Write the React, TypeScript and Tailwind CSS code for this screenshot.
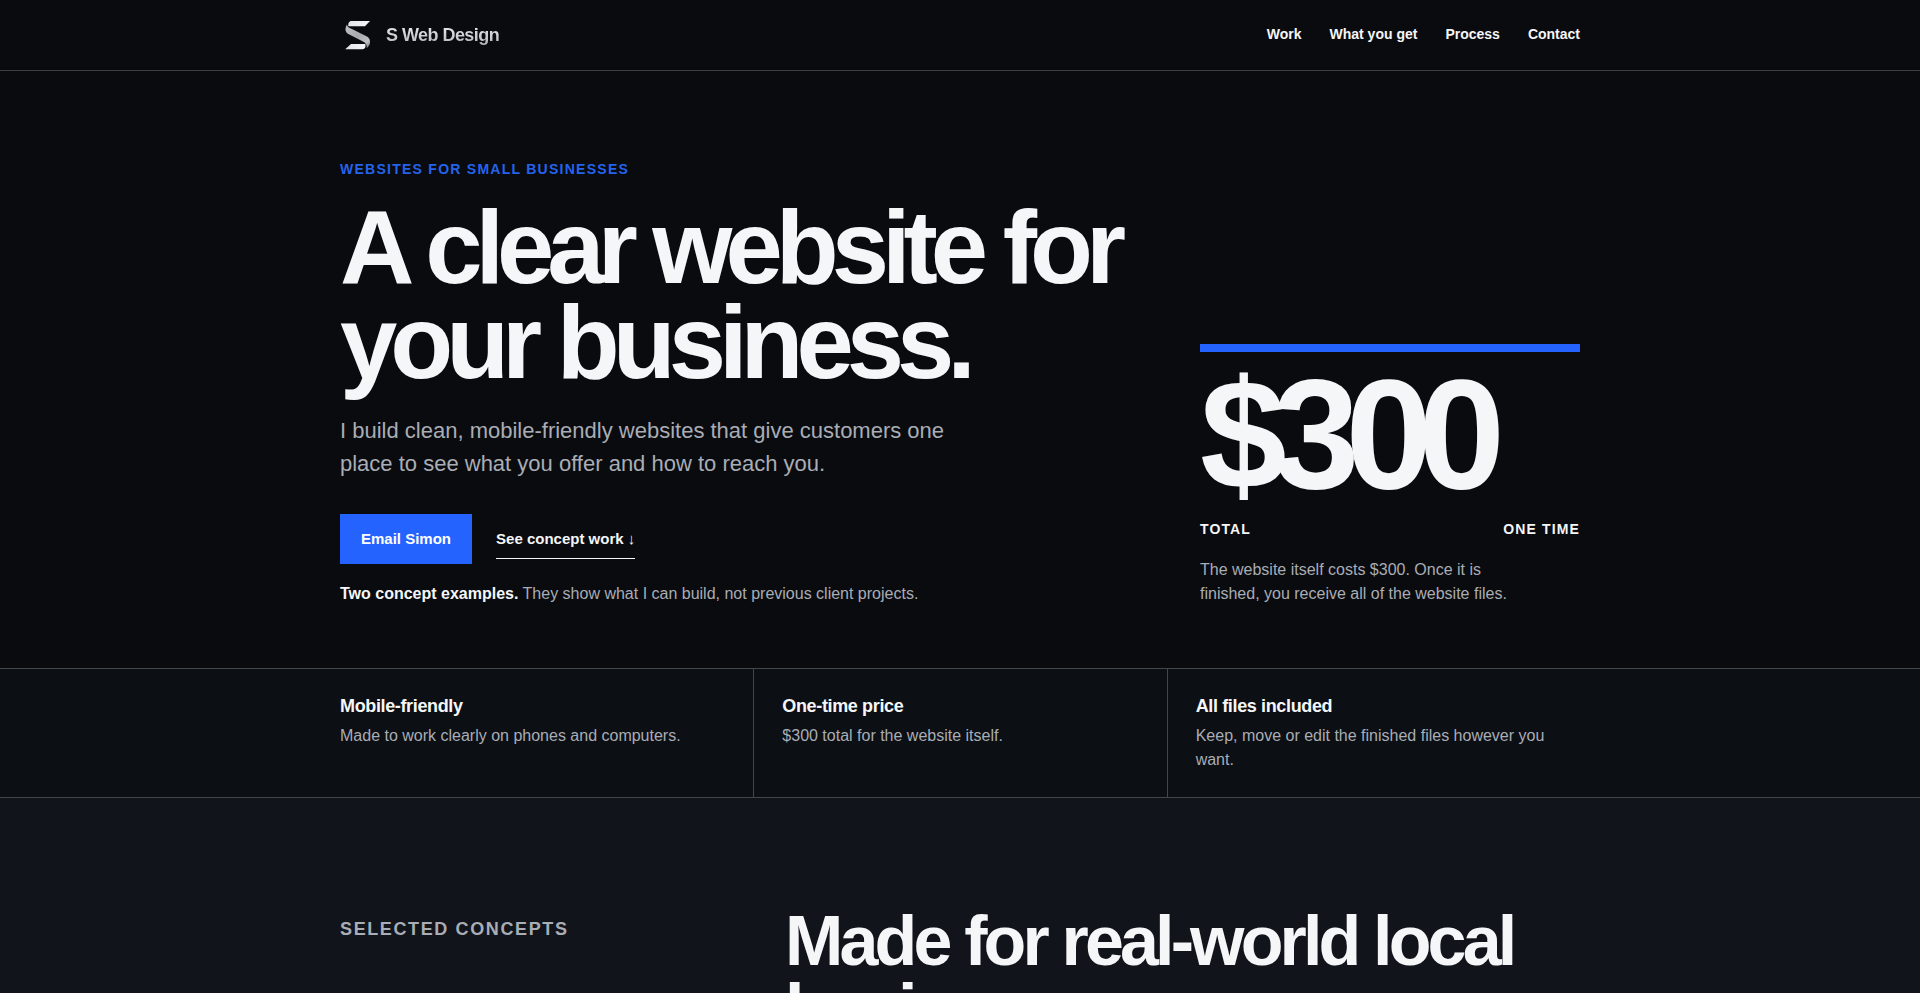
const navLinks = [
  { label: "Work", href: "#work" },
  { label: "What you get", href: "#included" },
  { label: "Process", href: "#process" },
  { label: "Contact", href: "#contact" },
];

const facts = [
  { title: "Mobile-friendly", text: "Made to work clearly on phones and computers." },
  { title: "One-time price", text: "$300 total for the website itself." },
  { title: "All files included", text: "Keep, move or edit the finished files however you want." },
];

function Logo() {
  return (
    <svg viewBox="0 0 36 36" className="w-9 h-9 shrink-0" aria-hidden="true">
      <defs>
        <linearGradient id="bar" x1="0" y1="0" x2="1" y2="0">
          <stop offset="0" stopColor="#e4e5e9" />
          <stop offset="1" stopColor="#f5f6f8" />
        </linearGradient>
        <linearGradient id="ribbon" x1="0" y1="0" x2="1" y2="1">
          <stop offset="0" stopColor="#c0c1c5" />
          <stop offset="0.5" stopColor="#a9aaae" />
          <stop offset="0.8" stopColor="#c0c1c5" />
          <stop offset="1" stopColor="#6e7075" />
        </linearGradient>
      </defs>
      <path d="M11.5 4H30L25 9.200H8.300C8 6.500 9 4 11.500 4Z" fill="url(#bar)" />
      <path d="M7 7.500C4.600 11.500 5 15.300 8.800 17.300L22.500 24.300C26 26 27.300 28 26.600 31.200C31.200 28 31.400 21.800 26.500 19.300L12.500 12.200C9 10.600 7 10 7 7.500Z" fill="url(#ribbon)" />
      <path d="M11 27H25.300C26 29.500 25 32.200 22.500 32.200H5.200Z" fill="url(#bar)" />
    </svg>
  );
}

export default function App() {
  return (
    <div className="min-h-screen bg-[#090b0f] font-['Liberation_Sans',Arial,sans-serif] text-base text-[#f5f6f8]">
      <header className="border-b border-[#3c3f42]">
        <div className="max-w-[1240px] h-[70px] mx-auto flex items-center justify-between">
          <a href="#top" className="flex items-center gap-2.5">
            <Logo />
            <span className="bg-gradient-to-b from-[#f5f6f8] to-[#a9adb5] bg-clip-text text-transparent text-lg font-bold tracking-[-0.03em]">
              S Web Design
            </span>
          </a>
          <nav className="pb-0.5 flex gap-7 text-sm font-bold">
            {navLinks.map(({ label, href }) => (
              <a key={label} href={href}>{label}</a>
            ))}
          </nav>
        </div>
      </header>

      <main id="top">
        {/* Hero */}
        <section className="max-w-[1240px] mx-auto pt-[86px] pb-[62px] grid grid-cols-[1fr_380px] gap-12 items-end">
          <div>
            <p className="text-sm leading-6 font-bold uppercase tracking-[0.09em] text-[#2563eb]">
              Websites for small businesses
            </p>
            <h1 className="mt-[19px] text-[103px] leading-[95px] font-bold tracking-[-7px]">
              A clear website for your business.
            </h1>
            <p className="mt-6 max-w-[640px] text-[22px] leading-[33px] text-[#a9adb5]">
              I build clean, mobile-friendly websites that give customers one place to see what you offer and how to reach you.
            </p>
            <div className="mt-[34px] flex items-center gap-6 text-[15px] font-bold">
              <a href="mailto:simon@example.com" className="h-[50px] px-[21px] flex items-center bg-[#2563ff] text-white">
                Email Simon
              </a>
              <a href="#work" className="h-10 pt-0.5 flex items-center border-b border-[#f5f6f8]">
                See concept work ↓
              </a>
            </div>
            <p className="mt-[18px] text-[#a9adb5]">
              <strong className="text-[#f5f6f8]">Two concept examples.</strong> They show what I can build, not previous client projects.
            </p>
          </div>

          <aside className="border-t-8 border-[#2563ff] pt-[18px]">
            <p className="text-[156px] leading-[128px] font-bold tracking-[-0.09em]">$300</p>
            <div className="mt-[19px] flex justify-between text-sm leading-6 font-bold uppercase tracking-[0.08em]">
              <span>Total</span>
              <span>One time</span>
            </div>
            <p className="mt-[17px] max-w-[320px] text-[#a9adb5]">
              The website itself costs $300. Once it is finished, you receive all of the website files.
            </p>
          </aside>
        </section>

        {/* Key facts */}
        <section id="included" className="border-y border-[#43464a] bg-[#0c0f14]">
          <div className="max-w-[1240px] mx-auto grid grid-cols-3">
            {facts.map(({ title, text }) => (
              <div key={title} className="py-[25px] px-7 border-l border-[#43464a] first:border-l-0 first:pl-0">
                <h2 className="text-lg leading-6 font-bold tracking-[-0.02em]">{title}</h2>
                <p className="mt-1.5 text-[#a9adb5]">{text}</p>
              </div>
            ))}
          </div>
        </section>

        {/* Concept work */}
        <section id="work" className="bg-[#11141b]">
          <div className="max-w-[1240px] mx-auto py-[109px] grid grid-cols-[397px_1fr] gap-12">
            <p className="pt-2 text-lg font-bold uppercase tracking-[0.09em] text-[#a9adb5]">Selected concepts</p>
            <h2 className="text-[70px] leading-[68px] font-bold tracking-[-0.055em]">
              Made for real-world local businesses.
            </h2>
          </div>
        </section>
      </main>
    </div>
  );
}
